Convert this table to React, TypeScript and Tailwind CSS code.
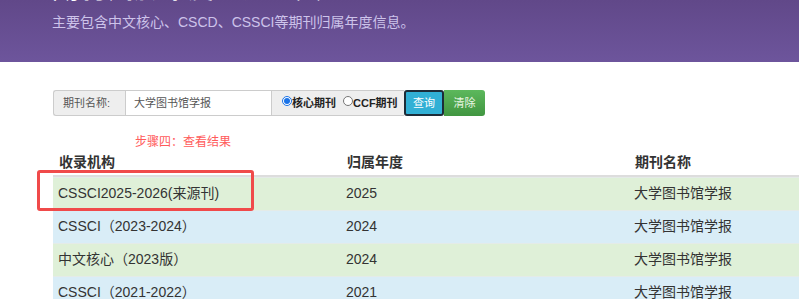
import React from "react";

const rows = [
  { org: "CSSCI2025-2026(来源刊)", year: "2025", name: "大学图书馆学报", tone: "green" },
  { org: "CSSCI（2023-2024）", year: "2024", name: "大学图书馆学报", tone: "blue" },
  { org: "中文核心（2023版）", year: "2024", name: "大学图书馆学报", tone: "green" },
  { org: "CSSCI（2021-2022）", year: "2021", name: "大学图书馆学报", tone: "blue" },
];

export default function App() {
  return (
    <div className="relative w-[799px] h-[299px] overflow-hidden bg-white font-['Liberation_Sans','Noto_Sans_CJK_SC',sans-serif] text-[#333]">
      <header className="h-[62px] bg-gradient-to-b from-[#614889] to-[#6d559c] pl-[52px] overflow-hidden">
        <h1 className="-mt-[24px] text-[27px] leading-[27px] font-bold text-white whitespace-nowrap">
          期刊归属年度查询工具
        </h1>
        <p className="mt-[9px] text-[14px] leading-[20px] text-[#cdc3ea] whitespace-nowrap">
          主要包含中文核心、CSCD、CSSCI等期刊归属年度信息。
        </p>
      </header>

      <div className="pl-[53px] pt-[28px]">
        <div className="flex h-[26px] text-[11px]">
          <div className="w-[72px] flex items-center pl-[9px] bg-[#eeeeee] border border-[#cccccc] border-r-0 rounded-l-[3px] text-[#555]">
            期刊名称:
          </div>
          <div className="w-[147px] flex items-center pl-[8px] bg-white border border-[#cccccc] text-[#555]">
            大学图书馆学报
          </div>
          <div className="w-[132px] flex items-center pl-[10px] bg-[#eeeeee] border-y border-[#cccccc] font-bold text-[#222]">
            <span className="w-[10px] h-[10px] rounded-full border border-[#1a73e8] bg-white flex items-center justify-center -mt-[4px]">
              <span className="w-[6px] h-[6px] rounded-full bg-[#1a73e8]" />
            </span>
            <span>核心期刊</span>
            <span className="ml-[7px] w-[10px] h-[10px] rounded-full border border-[#767676] bg-white -mt-[4px]" />
            <span>CCF期刊</span>
          </div>
          <div className="w-[40px] flex items-center justify-center bg-[#31b0d5] border-2 border-[#1d2c38] rounded-[3px] text-white">
            查询
          </div>
          <div className="w-[41px] flex items-center justify-center bg-gradient-to-b from-[#5cb85c] to-[#419641] rounded-r-[3px] text-[#eaf6e3]">
            清除
          </div>
        </div>

        <div className="mt-[18px] ml-[82px] text-[12px] leading-[16px] text-[#ff5b5b]">
          步骤四：查看结果
        </div>

        <div className="w-[900px] mt-[2px] text-[14px]">
          <div className="grid grid-cols-[288px_288px_1fr] border-b-2 border-[#dddddd] font-bold">
            <div className="pl-[6px] pb-[3px] leading-[20px]">收录机构</div>
            <div className="pl-[6px] pb-[3px] leading-[20px]">归属年度</div>
            <div className="pl-[6px] pb-[3px] leading-[20px]">期刊名称</div>
          </div>
          {rows.map((r, i) => (
            <div
              key={i}
              className={
                "grid grid-cols-[288px_288px_1fr] border-t border-[#e4ebe8] " +
                (r.tone === "green" ? "bg-[#dff0d8]" : "bg-[#d9edf7]")
              }
            >
              <div className="pl-[5px] pt-[5px] pb-[7px] leading-[20px]">{r.org}</div>
              <div className="pl-[5px] pt-[5px] pb-[7px] leading-[20px]">{r.year}</div>
              <div className="pl-[5px] pt-[5px] pb-[7px] leading-[20px]">{r.name}</div>
            </div>
          ))}
        </div>
      </div>

      <div className="absolute left-[37px] top-[170px] w-[217px] h-[41px] border-[3px] border-[#f04a4a] rounded-[3px]" />
    </div>
  );
}
